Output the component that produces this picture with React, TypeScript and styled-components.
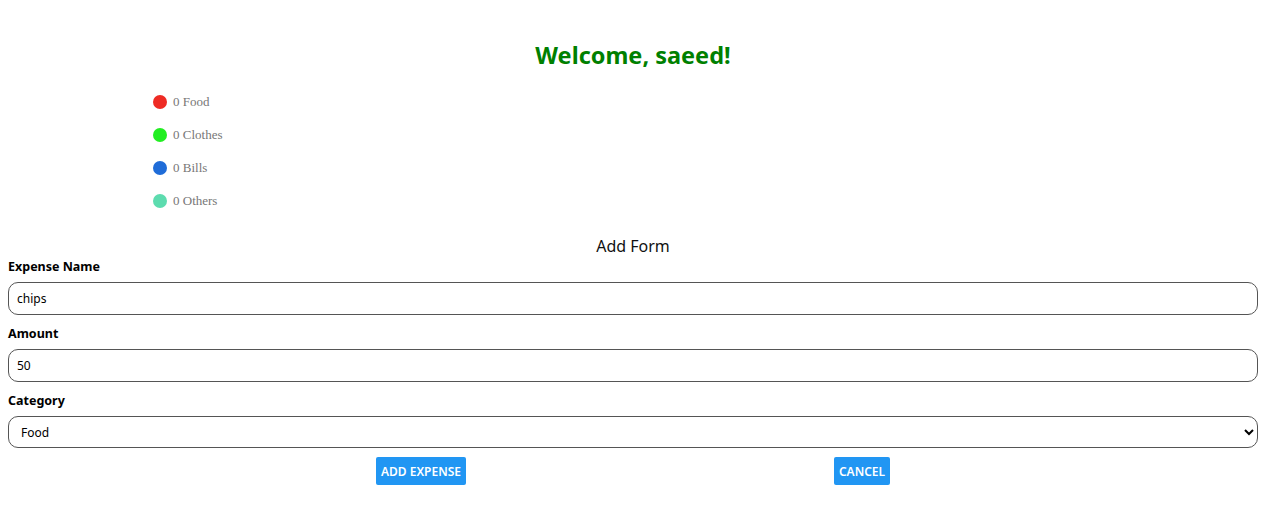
import React from "react";
import styled, { createGlobalStyle } from "styled-components";

const Global = createGlobalStyle`
  body {
    margin: 8px;
    font-family: "Noto Sans", "Open Sans", sans-serif;
    background: #fff;
  }
  * { box-sizing: border-box; }
`;

const Page = styled.div`
  display: flex;
  flex-direction: column;
`;

const Title = styled.h1`
  margin: 30px 0 0;
  text-align: center;
  color: #008000;
  font-size: 23.5px;
  font-weight: 700;
  line-height: 34px;
`;

const Legend = styled.ul`
  list-style: none;
  margin: 23px 0 0 145px;
  padding: 0;
  display: flex;
  flex-direction: column;
  gap: 19px;
`;

const LegendItem = styled.li`
  display: flex;
  align-items: center;
  gap: 6px;
  height: 14px;
  font-family: "Liberation Serif", "Times New Roman", serif;
  font-size: 13px;
  color: #777;
`;

const Dot = styled.span<{ $color: string }>`
  width: 14px;
  height: 14px;
  border-radius: 50%;
  background: ${(p) => p.$color};
`;

const FormTitle = styled.h3`
  margin: 28px 0 0;
  text-align: center;
  font-size: 16px;
  font-weight: 400;
  line-height: 20px;
  color: #111;
`;

const Form = styled.form`
  display: flex;
  flex-direction: column;
  padding-top: 2px;
`;

const Label = styled.label`
  font-size: 12.5px;
  font-weight: 700;
  color: #000;
  line-height: 18px;
  margin-bottom: 6px;
`;

const Field = styled.input`
  width: 100%;
  height: 33px;
  border: 1px solid #555;
  border-radius: 10px;
  padding: 0 8px;
  font-family: inherit;
  font-size: 12px;
  color: #000;
  background: #fff;
  margin-bottom: 10px;
  outline: none;
`;

const Select = styled.select`
  width: 100%;
  height: 32px;
  border: 1px solid #555;
  border-radius: 10px;
  padding: 0 8px;
  font-family: inherit;
  font-size: 12px;
  color: #000;
  background: #fff;
  outline: none;
`;

const Buttons = styled.div`
  display: flex;
  justify-content: space-evenly;
  margin-top: 9px;
`;

const Button = styled.button`
  height: 28px;
  padding: 0 5px;
  border: none;
  border-radius: 2px;
  background: #2196f3;
  color: #fff;
  font-family: inherit;
  font-size: 12px;
  font-weight: 600;
  cursor: pointer;
`;

const legend = [
  { color: "#ee2b24", label: "0 Food" },
  { color: "#22ee22", label: "0 Clothes" },
  { color: "#1f6cd8", label: "0 Bills" },
  { color: "#5ddcaf", label: "0 Others" },
];

export default function App() {
  return (
    <Page>
      <Global />
      <Title>Welcome, saeed!</Title>
      <Legend>
        {legend.map((l) => (
          <LegendItem key={l.label}>
            <Dot $color={l.color} />
            {l.label}
          </LegendItem>
        ))}
      </Legend>
      <FormTitle>Add Form</FormTitle>
      <Form onSubmit={(e) => e.preventDefault()}>
        <Label>Expense Name</Label>
        <Field defaultValue="chips" />
        <Label>Amount</Label>
        <Field defaultValue="50" />
        <Label>Category</Label>
        <Select defaultValue="Food">
          <option>Food</option>
          <option>Clothes</option>
          <option>Bills</option>
          <option>Others</option>
        </Select>
        <Buttons>
          <Button type="submit">ADD EXPENSE</Button>
          <Button type="button">CANCEL</Button>
        </Buttons>
      </Form>
    </Page>
  );
}
